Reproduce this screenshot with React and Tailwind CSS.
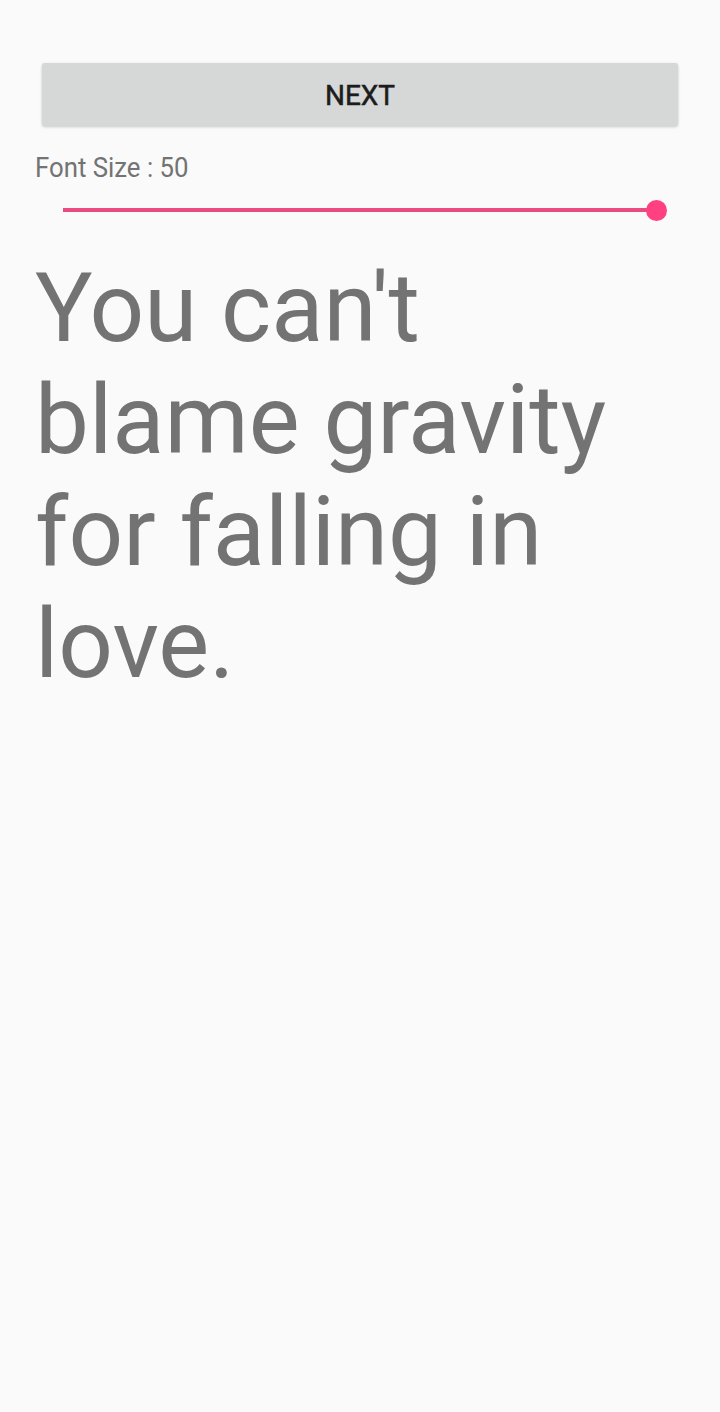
export default function App() {
  return (
    <div className="min-h-[1412px] w-full bg-[#fafafa] px-[35px] pt-[63px] font-['Roboto',sans-serif]">
      <button
        type="button"
        className="mx-[7px] flex h-[63px] w-[636px] items-center justify-center rounded-[3px] bg-[#d6d7d7] pt-[2px] text-[28px] font-normal text-[#1c1c1c] shadow-[0_1px_3px_rgba(0,0,0,0.2)] [-webkit-text-stroke:0.5px_#1c1c1c]"
      >
        NEXT
      </button>
      <p className="mt-[25px] text-[28px] leading-[33px] text-[#737373]">
        <span className="inline-block origin-left scale-x-[0.92]">Font Size : 50</span>
      </p>
      <div className="mt-[15px] flex h-[22px] items-center pl-[28px] pr-[18px]">
        <div className="h-[4px] flex-1 bg-[#e94c80]" />
        <div className="-ml-[10px] h-[21px] w-[21px] rounded-full bg-[#ff4081]" />
      </div>
      <p className="mt-[31px] text-[96px] leading-[112px] text-[#737373]">
        You can't blame gravity for falling in love.
      </p>
    </div>
  )
}
